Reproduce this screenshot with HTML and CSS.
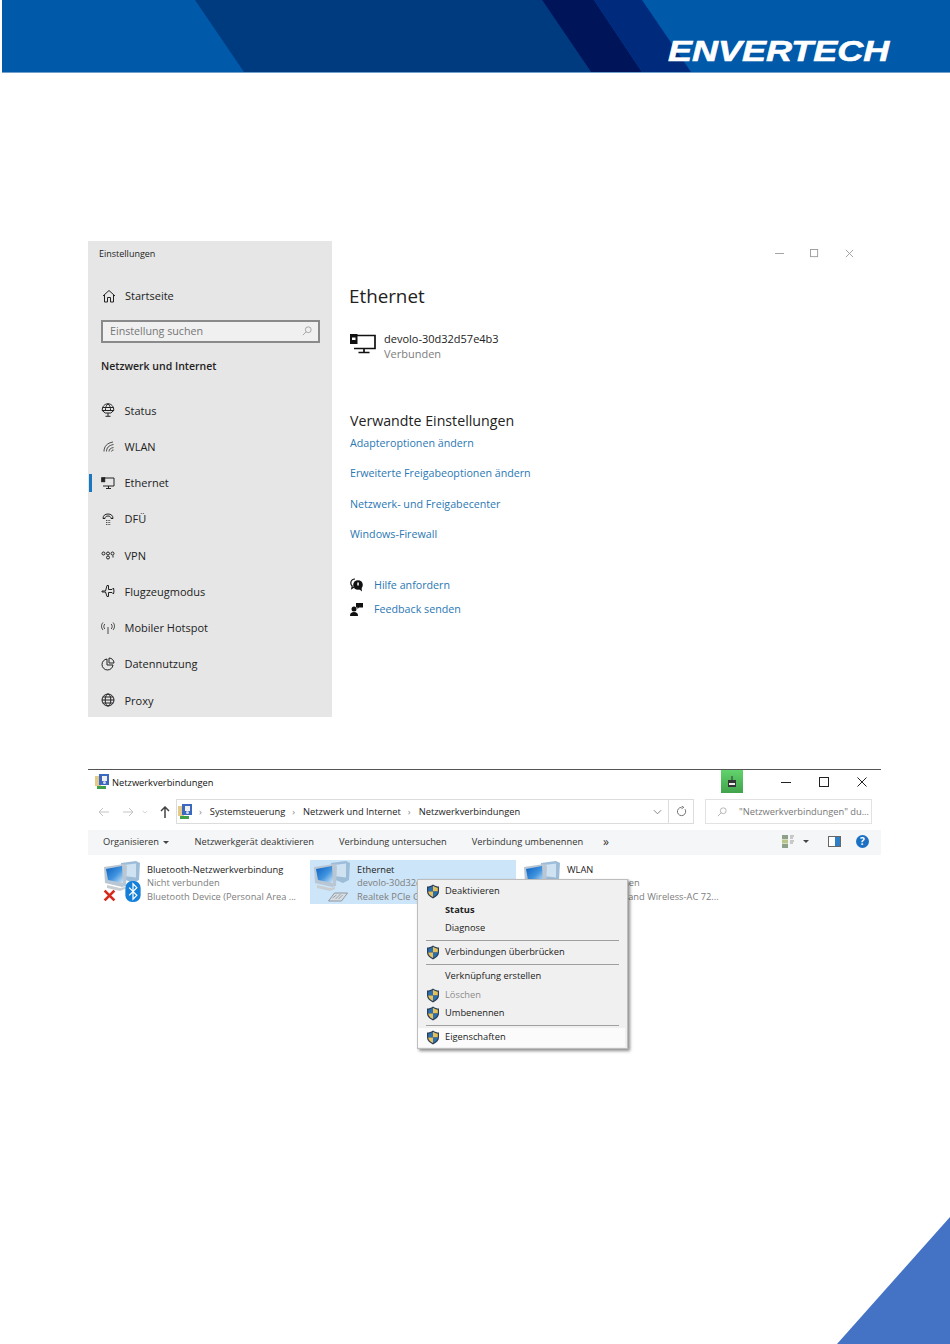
FILE: index.html
```html
<!DOCTYPE html>
<html lang="de">
<head>
    <meta charset="UTF-8">
    <title>Netzwerkverbindungen</title>
    <link rel="stylesheet" href="styles.css">
</head>
<body>
    <svg class="sprites" width="0" height="0">
        <defs>
            <linearGradient id="screen" x1="0" y1="0" x2="1" y2="1">
                <stop offset="0" stop-color="#0b5fc0"/>
                <stop offset="0.55" stop-color="#3f93de"/>
                <stop offset="1" stop-color="#d4e8f8"/>
            </linearGradient>
        </defs>
        <symbol id="shield" viewBox="0 0 14 15">
            <path d="M7 .5C5 2 3 2.600 1 2.600v5c0 3 2.500 5.400 6 6.900 3.500-1.500 6-3.900 6-6.900v-5C11 2.600 9 2 7 .5z" fill="#2a3f57"/>
            <path d="M7 1.800V7.500H2.200V3.700C4 3.600 5.500 3 7 1.800z" fill="#2c6fb0"/>
            <path d="M7 1.800V7.500h4.800V3.700C10 3.600 8.500 3 7 1.800z" fill="#e6c05a"/>
            <path d="M2.200 7.500H7v5.500C4.300 11.800 2.400 10 2.200 7.500z" fill="#e6c05a"/>
            <path d="M11.800 7.500H7v5.500c2.700-1.200 4.600-3 4.800-5.500z" fill="#2c6fb0"/>
        </symbol>
        <symbol id="netpc" viewBox="0 0 38 30">
            <path d="M18 2l15-2 4 2-1 17-6 3-12-5z" fill="#9dbcd8"/>
            <path d="M21 4l12-1.500v14L21 15z" fill="#cfe2f2"/>
            <path d="M1 6l20-3 3 2-1 20-4 1L2 22z" fill="#b9c7d4"/>
            <path d="M3 8l16-3 1 17-15-3z" fill="url(#screen)"/>
            <path d="M4 24l13 3 5-1v2l-5 2-13-3z" fill="#c9ced3"/>
        </symbol>
        <symbol id="cpanel" viewBox="0 0 14 16">
            <rect x="0" y="2" width="6" height="10" fill="#e3c98a"/>
            <rect x="4" y="0" width="10" height="11" fill="#3c69c0"/>
            <rect x="7" y="2" width="5" height="5" fill="#f0f0f0"/>
            <circle cx="9.500" cy="8.500" r="1.500" fill="#d8d8e8"/>
            <rect x="2" y="12" width="9" height="3" fill="#3fa04a"/>
        </symbol>
    </svg>

    <header class="banner">
        <svg class="banner-art" viewBox="0 0 948 72" width="948" height="72">
            <rect width="948" height="72" fill="#0059a9"/>
            <polygon points="193,0 540,0 589,72 242,72" fill="#003b80"/>
            <polygon points="540,0 592,0 640,72 589,72" fill="#001459"/>
            <polygon points="592,0 640,0 689,72 640,72" fill="#002a7c"/>
        </svg>
        <div class="logo">ENVERTECH</div>
    </header>

    <section class="settings">
        <aside class="side">
            <div class="side-title">Einstellungen</div>
            <div class="home">
                <svg class="ico" viewBox="0 0 14 14"><path d="M1 7l6-5.500L13 7M2.500 6v7H5.500V8.500h3V13h3V6"/></svg>
                <span>Startseite</span>
            </div>
            <div class="find">
                <span>Einstellung suchen</span>
                <svg class="find-ico" viewBox="0 0 12 12"><circle cx="7.500" cy="4.500" r="3.500"/><path d="M5 7l-4 4"/></svg>
            </div>
            <h2 class="side-head">Netzwerk und Internet</h2>
            <ul class="nav">
                <li><svg class="ico" viewBox="0 0 14 14"><path d="M1.200 7.500C1.200 3.500 3.500.8 7 .8s5.800 2.700 5.800 6.700zM4.500 7.500C4.300 5 5 2.500 7 .8c2 1.700 2.700 4.200 2.500 6.700M1.500 4.500h11M1.200 7.500l3 2.500h5.600l3-2.500M7 10v3M4.500 13.300h5"/></svg>Status</li>
                <li><svg class="ico thin" viewBox="0 0 14 14"><path d="M3 12.500c0-5 3-8.500 9-9.500M5.500 12.500c0-3.500 2-6 7-7M8 12.500c0-2 1.500-3.500 4.500-4M10.500 12.500c0-.8.800-1.500 2-1.500"/></svg>WLAN</li>
                <li class="on"><svg class="ico" viewBox="0 0 14 14"><path d="M3 2h10v8H2M7.500 10v2.500M5 12.500h5"/><rect x=".7" y="1.700" width="3" height="4" fill="#222"/></svg>Ethernet</li>
                <li><svg class="ico" viewBox="0 0 14 14"><path d="M2 6.500C2 3.500 4 2 7 2s5 1.500 5 4.500M4 6.500C4 5 5.200 4 7 4s3 1 3 2.500M2 6.500h2M10 6.500h2"/><path d="M5 8.500h.8M6.700 8.500h.8M8.400 8.500h.8M5 10.500h.8M6.700 10.500h.8M8.400 10.500h.8M5 12.500h.8M6.700 12.500h.8M8.400 12.500h.8"/></svg>DFÜ</li>
                <li><svg class="ico" viewBox="0 0 14 14"><circle cx="2.500" cy="5.500" r="1.500"/><circle cx="7" cy="5.500" r="1.500"/><circle cx="11.500" cy="5.500" r="1.500"/><circle cx="7" cy="9.500" r="1.500"/><path d="M12 7.500v2"/></svg>VPN</li>
                <li><svg class="ico" viewBox="0 0 14 14"><path d="M1 7h3.500L6 1.500h1.500L7.500 5.500H11l1.500-1.500L13 7l-.5 3-1.500-1.500H7.500l0 4H6L4.500 8H1z"/></svg>Flugzeugmodus</li>
                <li><svg class="ico thin" viewBox="0 0 14 14"><path d="M7 6v7M3.800 3c-1.300 1.500-1.300 3.500 0 5M10.200 3c1.300 1.500 1.300 3.500 0 5M2 1.500C0 3.800 0 6.500 2 9M12 1.500c2 2.300 2 5 0 7.500"/></svg>Mobiler Hotspot</li>
                <li><svg class="ico" viewBox="0 0 14 14"><path d="M6 2a5.500 5.500 0 1 0 6 6H6z"/><path d="M8 1a5 5 0 0 1 5 5H8z"/></svg>Datennutzung</li>
                <li><svg class="ico" viewBox="0 0 14 14"><circle cx="7" cy="7" r="6"/><ellipse cx="7" cy="7" rx="2.800" ry="6"/><path d="M1 7h12M1.800 4h10.400M1.800 10h10.400"/></svg>Proxy</li>
            </ul>
        </aside>
        <main class="pane">
            <div class="win-ctl">
                <svg viewBox="0 0 10 10"><path d="M0 5h10"/></svg>
                <svg viewBox="0 0 10 10"><rect x=".5" y=".5" width="8" height="8"/></svg>
                <svg viewBox="0 0 10 10"><path d="M1 1l8 8M9 1l-8 8"/></svg>
            </div>
            <h1 class="pane-title">Ethernet</h1>
            <div class="device">
                <svg class="device-ico" viewBox="0 0 26 20"><path d="M5 1.500h20v13H4M14 14.500v3.500M8.500 18.500h11" fill="none" stroke="#111" stroke-width="1.700"/><rect x="0" y="0" width="7.500" height="10" fill="#111"/><rect x="2" y="3.500" width="3.500" height="2.500" fill="#fff"/></svg>
                <div>
                    <div class="device-name">devolo-30d32d57e4b3</div>
                    <div class="device-state">Verbunden</div>
                </div>
            </div>
            <h2 class="rel-head">Verwandte Einstellungen</h2>
            <div class="links">
                <a>Adapteroptionen ändern</a>
                <a>Erweiterte Freigabeoptionen ändern</a>
                <a>Netzwerk- und Freigabecenter</a>
                <a>Windows-Firewall</a>
            </div>
            <div class="help">
                <a><svg class="help-ico" viewBox="0 0 14 14"><path d="M5 1C2.500 1 .8 2.800.8 5c0 1.300.6 2.300 1.400 3l-.4 2.500L4 9" fill="none" stroke="#111" stroke-width="1.200"/><circle cx="8" cy="7" r="4.800" fill="#111"/><rect x="7.300" y="4.500" width="1.500" height="3" fill="#fff"/><path d="M9 11l3 2.500-.5-3.500z" fill="#111"/></svg>Hilfe anfordern</a>
                <a><svg class="help-ico" viewBox="0 0 14 14"><circle cx="4" cy="7" r="2.500" fill="#111"/><path d="M0 14c0-3 1.500-4 4-4s4 1 4 4z" fill="#111"/><path d="M6 1h7v4.500H9L7.500 7V5.500H6z" fill="#111"/></svg>Feedback senden</a>
            </div>
        </main>
    </section>

    <section class="explorer">
        <div class="ex-title">
            <svg class="ex-ico"><use href="#cpanel"/></svg>
            <span class="ex-name">Netzwerkverbindungen</span>
            <div class="tab-tag"><svg viewBox="0 0 10 12" width="10" height="12"><path d="M5 0v4" stroke="#333"/><rect x="1" y="4" width="8" height="7" fill="#333"/><rect x="2" y="7" width="6" height="2" fill="#eee"/></svg></div>
            <div class="ex-ctl">
                <svg viewBox="0 0 10 10"><path d="M0 5.500h10"/></svg>
                <svg viewBox="0 0 10 10"><rect x=".5" y=".5" width="9" height="9"/></svg>
                <svg viewBox="0 0 10 10"><path d="M.5.500l9 9M9.500.500l-9 9"/></svg>
            </div>
        </div>
        <div class="ex-addr">
            <div class="arrows">
                <svg class="faint" viewBox="0 0 12 10"><path d="M11 5H1M5 1L1 5l4 4"/></svg>
                <svg class="faint" viewBox="0 0 12 10"><path d="M1 5h10M7 1l4 4-4 4"/></svg>
                <svg class="faint tiny" viewBox="0 0 8 5"><path d="M1 1l3 3 3-3"/></svg>
                <svg class="up" viewBox="0 0 10 12"><path d="M5 12V1M1 5l4-4 4 4"/></svg>
            </div>
            <div class="crumbs">
                <svg class="ex-ico"><use href="#cpanel"/></svg>
                <span class="sep">›</span><span>Systemsteuerung</span>
                <span class="sep">›</span><span>Netzwerk und Internet</span>
                <span class="sep">›</span><span>Netzwerkverbindungen</span>
                <svg class="chev" viewBox="0 0 10 6"><path d="M1 1l4 4 4-4"/></svg>
                <div class="refresh"><svg viewBox="0 0 12 12"><path d="M9.800 3.500A4.500 4.500 0 1 1 6 1.500M6 0l2.500 1.500L6 3"/></svg></div>
            </div>
            <div class="ex-find">
                <svg viewBox="0 0 12 12"><circle cx="7.500" cy="4.500" r="3.500"/><path d="M5 7l-4 4"/></svg>
                <span>"Netzwerkverbindungen" du...</span>
            </div>
        </div>
        <div class="ex-tools">
            <span>Organisieren <i class="drop"></i></span>
            <span>Netzwerkgerät deaktivieren</span>
            <span>Verbindung untersuchen</span>
            <span>Verbindung umbenennen</span>
            <span class="more">»</span>
            <div class="tools-right">
                <svg width="12" height="13" viewBox="0 0 12 13"><rect width="6" height="4" fill="#8fa08a"/><rect y="4.500" width="6" height="4" fill="#b7c48a"/><rect y="9" width="6" height="4" fill="#8fa08a"/><path d="M8 1h4M8 3h3M8 6h4M8 8h3" stroke="#999"/></svg>
                <i class="drop"></i>
                <svg class="pane-btn" width="13" height="11" viewBox="0 0 13 11"><rect x=".5" y=".5" width="12" height="10" fill="#fff" stroke="#666"/><rect x="7" y="1" width="5" height="9" fill="#2f7fc8"/></svg>
                <div class="help-btn">?</div>
            </div>
        </div>
        <div class="conns">
            <div class="conn">
                <div class="conn-ico">
                    <svg class="pc"><use href="#netpc"/></svg>
                    <svg class="x" viewBox="0 0 12 12"><path d="M1.500 1.500l9 9M10.500 1.500l-9 9"/></svg>
                    <svg class="bt" viewBox="0 0 16 22"><rect width="16" height="22" rx="7" fill="#1680d8"/><path d="M4 7l8 8-4 4V3l4 4-8 8" fill="none" stroke="#fff" stroke-width="1.300"/></svg>
                </div>
                <div class="conn-text">
                    <div class="conn-name">Bluetooth-Netzwerkverbindung</div>
                    <div>Nicht verbunden</div>
                    <div>Bluetooth Device (Personal Area ...</div>
                </div>
            </div>
            <div class="conn picked">
                <div class="conn-ico">
                    <svg class="pc"><use href="#netpc"/></svg>
                    <svg class="cable" viewBox="0 0 20 12"><path d="M0 11l6-8h13l-6 8z" fill="#d8dde2" stroke="#7c8791" stroke-width=".8"/><path d="M4 8l4-3M7 9l5-5M10 9l4-4" stroke="#7c8791" stroke-width=".7"/></svg>
                </div>
                <div class="conn-text">
                    <div class="conn-name">Ethernet</div>
                    <div>devolo-30d32d57e4b3</div>
                    <div>Realtek PCIe GbE Family Contr...</div>
                </div>
            </div>
            <div class="conn">
                <div class="conn-ico">
                    <svg class="pc"><use href="#netpc"/></svg>
                </div>
                <div class="conn-text">
                    <div class="conn-name">WLAN</div>
                    <div>Nicht verbunden</div>
                    <div>Intel(R) Dual Band Wireless-AC 72...</div>
                </div>
            </div>
        </div>
        <div class="menu">
            <div class="mi"><svg class="shield"><use href="#shield"/></svg>Deaktivieren</div>
            <div class="mi bold">Status</div>
            <div class="mi">Diagnose</div>
            <div class="mi-sep"></div>
            <div class="mi"><svg class="shield"><use href="#shield"/></svg>Verbindungen überbrücken</div>
            <div class="mi-sep"></div>
            <div class="mi">Verknüpfung erstellen</div>
            <div class="mi off"><svg class="shield"><use href="#shield"/></svg>Löschen</div>
            <div class="mi"><svg class="shield"><use href="#shield"/></svg>Umbenennen</div>
            <div class="mi-sep"></div>
            <div class="mi hover"><svg class="shield"><use href="#shield"/></svg>Eigenschaften</div>
        </div>
    </section>

    <div class="corner"></div>
</body>
</html>
```

FILE: styles.css
```css
:root {
    --side-bg: #e6e6e6;
    --ink: #222;
    --link: #2b78b4;
    --muted: #7d7d7d;
}

html, body {
    margin: 0;
    padding: 0;
}

body {
    position: relative;
    width: 950px;
    height: 1344px;
    overflow: hidden;
    background: #fff;
    color: var(--ink);
    font-family: "Open Sans", "Noto Sans", sans-serif;
    font-size: 11px;
}

.sprites {
    position: absolute;
}

/* header */

.banner {
    position: relative;
    height: 73px;
    margin-left: 2px;
}

.banner-art {
    display: block;
}

.banner::after {
    content: "";
    display: block;
    height: 1px;
    background: #6f9fca;
}

.logo {
    position: absolute;
    left: 666px;
    top: 31px;
    color: #fff;
    font-family: "Liberation Sans", sans-serif;
    font-size: 29px;
    font-style: italic;
    font-weight: bold;
    line-height: 40px;
    transform: scaleX(1.24);
    transform-origin: left center;
    -webkit-text-stroke: 0.6px #fff;
}

/* settings window */

.settings {
    display: flex;
    width: 782px;
    height: 476px;
    margin: 168px 0 0 88px;
}

.side {
    width: 244px;
    background: var(--side-bg);
}

.side-title {
    padding: 6px 0 0 11px;
    font-size: 9px;
    line-height: 13px;
}

.ico {
    width: 14px;
    height: 14px;
    fill: none;
    stroke: #222;
    stroke-width: 1;
    flex: none;
}

.ico.thin {
    stroke-width: 0.8;
}

.home {
    display: flex;
    align-items: center;
    gap: 9px;
    margin: 28px 0 0 14px;
    line-height: 16px;
}

.find {
    display: flex;
    align-items: center;
    justify-content: space-between;
    box-sizing: border-box;
    width: 219px;
    height: 23px;
    margin: 16px 0 0 13px;
    padding: 0 6px 1px 7px;
    border: 2px solid #8a8a8a;
    background: #f0f0f0;
    color: #777;
    font-size: 10.700px;
}

.find-ico {
    width: 10px;
    height: 10px;
    fill: none;
    stroke: #999;
}

.side-head {
    margin: 16px 0 0 13px;
    font-size: 10.500px;
    font-weight: 600;
    line-height: 14px;
}

.nav {
    list-style: none;
    margin: 19px 0 0;
    padding: 0;
}

.nav li {
    display: flex;
    align-items: center;
    gap: 9.500px;
    height: 36.250px;
    padding-left: 13px;
}

.nav li.on {
    position: relative;
}

.nav li.on::before {
    content: "";
    position: absolute;
    left: 1px;
    top: 9px;
    width: 3px;
    height: 18px;
    background: #1a78c2;
}

.pane {
    position: relative;
    flex: 1;
    padding-left: 17px;
}

.win-ctl {
    position: absolute;
    top: 8px;
    right: 16px;
    display: flex;
    gap: 26px;
}

.win-ctl svg {
    width: 9px;
    height: 9px;
    fill: none;
    stroke: #9a9a9a;
}

.pane-title {
    margin: 41px 0 0;
    font-size: 18.800px;
    font-weight: 400;
    line-height: 28px;
}

.device {
    display: flex;
    align-items: center;
    gap: 8px;
    margin: 21px 0 0 1px;
    line-height: 15px;
}

.device-ico {
    width: 26px;
    height: 20px;
    margin-top: -5px;
}

.device-state {
    color: var(--muted);
}

.rel-head {
    margin: 50px 0 0 1px;
    font-size: 14.200px;
    font-weight: 400;
    line-height: 20px;
}

.links {
    display: flex;
    flex-direction: column;
    gap: 14.300px;
    margin: 4px 0 0 1px;
    color: var(--link);
    font-size: 10.700px;
    line-height: 16px;
}

.help {
    display: flex;
    flex-direction: column;
    gap: 8px;
    margin: 35px 0 0 1px;
    color: var(--link);
    font-size: 10.700px;
    line-height: 16px;
}

.help a {
    display: flex;
    align-items: center;
    gap: 10px;
}

.help-ico {
    width: 14px;
    height: 14px;
}

/* explorer window */

.explorer {
    position: relative;
    width: 793px;
    height: 292px;
    margin: 52px 0 0 88px;
    border-top: 1px solid #555;
    font-size: 9.300px;
}

.ex-title {
    display: flex;
    align-items: center;
    box-sizing: border-box;
    height: 25px;
    padding: 0 0 1px 7px;
    color: #111;
}

.ex-ico {
    width: 14px;
    height: 16px;
    flex: none;
}

.ex-name {
    margin-left: 3px;
}

.tab-tag {
    display: flex;
    justify-content: center;
    align-items: center;
    width: 22px;
    height: 23px;
    margin: -1px 0 0 auto;
    background: linear-gradient(#62d36c, #41a34b);
}

.ex-ctl {
    display: flex;
    gap: 28px;
    margin: 0 14px 0 38px;
}

.ex-ctl svg {
    width: 10px;
    height: 10px;
    fill: none;
    stroke: #222;
}

.ex-addr {
    display: flex;
    align-items: center;
    height: 25px;
    margin-top: 4px;
}

.arrows {
    display: flex;
    align-items: center;
    width: 88px;
    padding-left: 10px;
    box-sizing: border-box;
    gap: 12px;
}

.arrows svg {
    fill: none;
    width: 12px;
    height: 10px;
}

.arrows .faint {
    stroke: #c4c4c4;
}

.arrows .tiny {
    width: 6px;
    height: 4px;
    margin-left: -4px;
}

.arrows .up {
    width: 10px;
    height: 12px;
    stroke: #444;
    stroke-width: 1.500;
}

.crumbs {
    display: flex;
    align-items: center;
    box-sizing: border-box;
    width: 518px;
    height: 25px;
    padding-left: 1px;
    border: 1px solid #dcdcdc;
    color: #222;
}

.crumbs .sep {
    margin: 0 8px 0 7px;
    color: #888;
}

.chev {
    width: 9px;
    height: 6px;
    margin-left: auto;
    fill: none;
    stroke: #777;
}

.refresh {
    display: flex;
    justify-content: center;
    align-items: center;
    width: 24px;
    height: 100%;
    margin-left: 6px;
    border-left: 1px solid #dcdcdc;
}

.refresh svg {
    width: 11px;
    height: 11px;
    fill: none;
    stroke: #666;
}

.ex-find {
    display: flex;
    align-items: center;
    gap: 12px;
    box-sizing: border-box;
    width: 167px;
    height: 25px;
    margin-left: 11px;
    padding-left: 11px;
    border: 1px solid #e2e2e2;
    color: #777;
    white-space: nowrap;
}

.ex-find svg {
    width: 10px;
    height: 10px;
    fill: none;
    stroke: #aaa;
    flex: none;
}

.ex-tools {
    display: flex;
    align-items: center;
    gap: 25px;
    box-sizing: border-box;
    height: 25px;
    margin-top: 6px;
    padding: 0 0 2px 15px;
    background: #f5f6f7;
    color: #333;
}

.more {
    margin-left: -5px;
    font-size: 12px;
}

.drop {
    display: inline-block;
    margin-left: 2px;
    vertical-align: middle;
    border: 3px solid transparent;
    border-top: 3px solid #444;
    border-bottom: 0;
}

.tools-right {
    display: flex;
    align-items: center;
    margin-left: auto;
    margin-right: 12px;
}

.tools-right .drop {
    margin-left: 9px;
}

.pane-btn {
    margin-left: 19px;
}

.help-btn {
    width: 13px;
    height: 13px;
    margin-left: 15px;
    border-radius: 50%;
    background: #1c70c4;
    color: #fff;
    font-size: 10px;
    font-weight: bold;
    line-height: 13px;
    text-align: center;
}

.conns {
    display: flex;
    padding: 5px 0 0 15px;
}

.conn {
    display: flex;
    gap: 7px;
    box-sizing: border-box;
    width: 207px;
    height: 44px;
    white-space: nowrap;
    color: var(--muted);
    line-height: 13.300px;
}

.conn.picked {
    width: 206px;
    padding-left: 3px;
    background: #cde5f8;
}

.conn.picked .conn-text {
    width: 60px;
    overflow: hidden;
}

.conn.picked + .conn {
    padding-left: 7px;
}

.conn-ico {
    position: relative;
    width: 37px;
    height: 44px;
    flex: none;
}

.pc {
    width: 38px;
    height: 30px;
    margin-top: 1px;
}

.x {
    position: absolute;
    left: 0;
    top: 29px;
    width: 13px;
    height: 13px;
    fill: none;
    stroke: #d52b1e;
    stroke-width: 2.500;
}

.bt {
    position: absolute;
    left: 22px;
    top: 21px;
    width: 16px;
    height: 21px;
}

.cable {
    position: absolute;
    left: 15px;
    top: 30px;
    width: 21px;
    height: 12px;
}

.conn-text {
    padding-top: 3px;
}

.conn-name {
    color: #222;
}

/* context menu */

.menu {
    position: absolute;
    left: 329px;
    top: 109px;
    box-sizing: border-box;
    width: 211px;
    height: 170px;
    padding-top: 2px;
    background: #f0f0f0;
    border: 1px solid #bdbdbd;
    box-shadow: 2px 2px 3px rgba(0, 0, 0, 0.45);
    color: #222;
}

.mi {
    position: relative;
    height: 18.500px;
    padding-left: 27px;
    line-height: 18.500px;
}

.mi.bold {
    font-weight: 700;
}

.mi.off {
    color: #8c8c8c;
}

.mi.hover {
    background: #fbfbfb;
    margin-right: 2px;
}

.mi-sep {
    height: 1px;
    margin: 2.250px 8px;
    background: #a0a0a0;
}

.shield {
    position: absolute;
    left: 8px;
    top: 2px;
    width: 14px;
    height: 15px;
}

/* page decoration */

.corner {
    position: absolute;
    right: 0;
    bottom: 0;
    width: 113px;
    height: 127px;
    background: #4472c4;
    clip-path: polygon(100% 0, 100% 100%, 0 100%);
}
```
